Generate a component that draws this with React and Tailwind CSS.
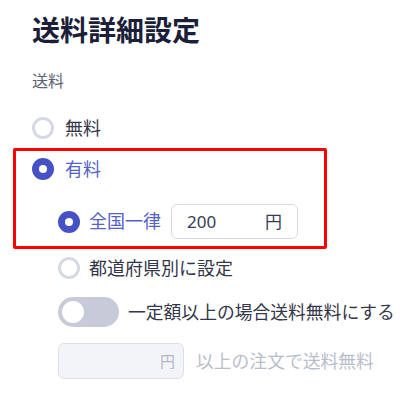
import React from "react";

const font = { fontFamily: '"Noto Sans", "Noto Sans CJK JP", sans-serif' };

function Radio({ checked }) {
  return checked ? (
    <span className="flex h-[22px] w-[22px] shrink-0 items-center justify-center rounded-full bg-[#4651c5]">
      <span className="h-[8px] w-[8px] rounded-full bg-white" />
    </span>
  ) : (
    <span className="h-[22px] w-[22px] shrink-0 rounded-full border-[3px] border-[#d5d9e4] bg-white" />
  );
}

export default function App() {
  return (
    <div className="h-[402px] w-[413px] bg-white pl-[32px] pt-[12px]" style={font}>
      <h1 className="text-[28px] font-bold leading-[36px] text-[#1b1f3a]">送料詳細設定</h1>
      <p className="mt-[23px] text-[16px] leading-[20px] text-[#5b6072]">送料</p>

      {/* 無料 */}
      <div className="mt-[25px] flex h-[24px] items-center gap-[11px]">
        <Radio />
        <span className="text-[18px] text-[#33364a]">無料</span>
      </div>

      {/* highlighted block */}
      <div className="ml-[-19px] mt-[8px] w-[314px] rounded-[2px] border-[3px] border-[#ff0000] pb-[7px] pl-[16px] pt-[6px]">
        <div className="flex h-[24px] items-center gap-[11px]">
          <Radio checked />
          <span className="text-[18px] text-[#5561c9]">有料</span>
        </div>
        <div className="ml-[26px] mt-[23px] flex h-[35px] items-center">
          <Radio checked />
          <span className="ml-[9px] text-[18px] text-[#5561c9]">全国一律</span>
          <div className="ml-[10px] flex h-[35px] w-[127px] items-center justify-between rounded-[6px] border border-[#d6dae6] bg-white pl-[15px] pr-[15px]">
            <span className="text-[17px] text-[#363a52]">200</span>
            <span className="text-[17px] text-[#363a52]">円</span>
          </div>
        </div>
      </div>

      <div className="ml-[26px]">
        <div className="mt-[7px] flex h-[24px] items-center gap-[9px]">
          <Radio />
          <span className="text-[18px] text-[#33364a]">都道府県別に設定</span>
        </div>

        <div className="mt-[17px] flex h-[30px] items-center gap-[9px]">
          <span className="flex h-[30px] w-[61px] shrink-0 items-center rounded-full bg-[#c7cbd9] pl-[4px]">
            <span className="h-[22px] w-[22px] rounded-full bg-white" />
          </span>
          <span className="text-[17.8px] text-[#33364a]">一定額以上の場合送料無料にする</span>
        </div>

        <div className="mt-[16px] flex h-[36px] items-center gap-[12px]">
          <div className="flex h-[36px] w-[126px] items-center justify-end rounded-[6px] border border-[#dde0ea] bg-[#f3f4f8] pr-[8px]">
            <span className="text-[15px] text-[#b3b7c6]">円</span>
          </div>
          <span className="text-[17.8px] text-[#b9bdcb]">以上の注文で送料無料</span>
        </div>
      </div>
    </div>
  );
}
